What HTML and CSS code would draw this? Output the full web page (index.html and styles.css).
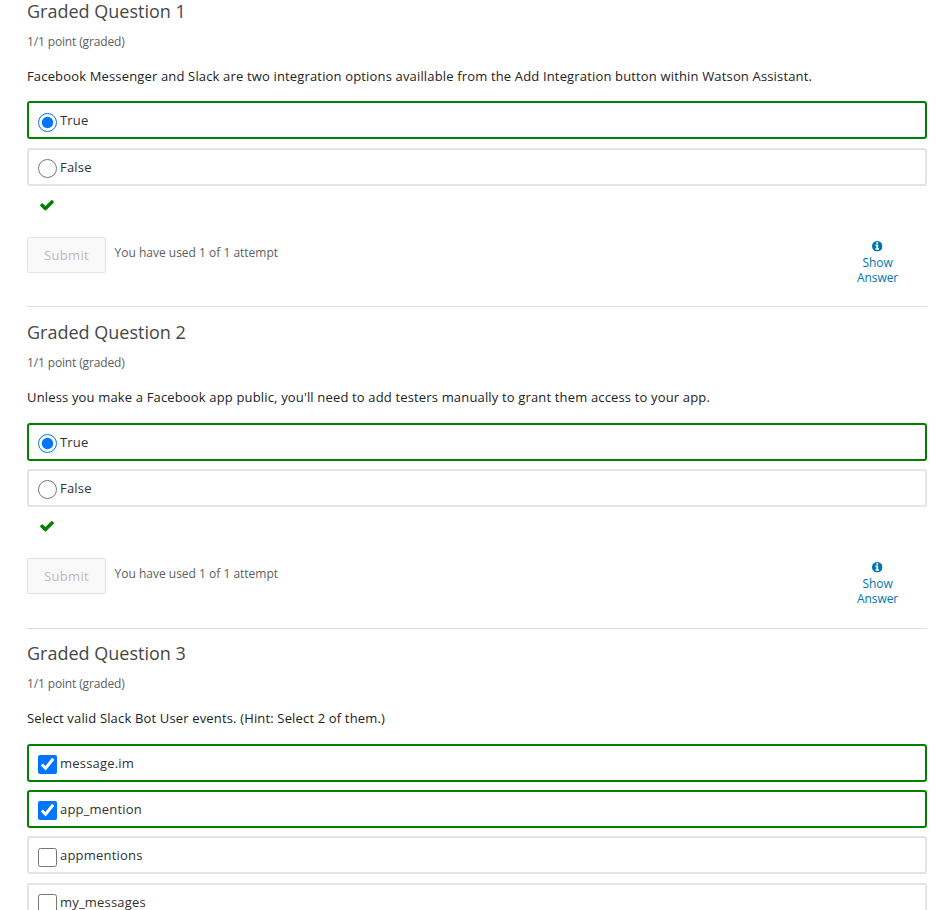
FILE: index.html
```html
<!DOCTYPE html>
<html lang="en">
<head>
<meta charset="utf-8">
<title>Graded Questions</title>
<link rel="stylesheet" href="styles.css">
</head>
<body>
<svg width="0" height="0" class="sprite" aria-hidden="true">
  <symbol id="check" viewBox="0 0 1792 1792"><path d="M1671 566q0 40-28 68l-724 724-136 136q-28 28-68 28t-68-28l-136-136-362-362q-28-28-28-68t28-68l136-136q28-28 68-28t68 28l294 295 656-657q28-28 68-28t68 28l136 136q28 28 28 68z"/></symbol>
  <symbol id="info" viewBox="128 128 1536 1536"><path d="M1152 1376v-160q0-14-9-23t-23-9h-96v-512q0-14-9-23t-23-9h-320q-14 0-23 9t-9 23v160q0 14 9 23t23 9h96v320h-96q-14 0-23 9t-9 23v160q0 14 9 23t23 9h448q14 0 23-9t9-23zM1024 480v-160q0-14-9-23t-23-9h-192q-14 0-23 9t-9 23v160q0 14 9 23t23 9h192q14 0 23-9t9-23zM1664 896q0 209-103 385.5t-279.5 279.5-385.5 103-385.5-103-279.5-279.5-103-385.5 103-385.5 279.5-279.5 385.5-103 385.5 103 279.5 279.5 103 385.5z"/></symbol>
</svg>
<main class="problems">
  <section class="problem">
    <h3 class="title">Graded Question 1</h3>
    <div class="progress">1/1 point (graded)</div>
    <p class="prompt">Facebook Messenger and Slack are two integration options availlable from the Add Integration button within Watson Assistant.</p>
    <div class="options">
      <label class="option correct"><input type="radio" name="q1" checked>True</label>
      <label class="option"><input type="radio" name="q1">False</label>
    </div>
    <div class="status"><svg class="check"><use href="#check"/></svg></div>
    <div class="actions">
      <button class="submit" disabled>Submit</button>
      <span class="attempts">You have used 1 of 1 attempt</span>
      <a class="show"><svg class="info"><use href="#info"/></svg>Show<br>Answer</a>
    </div>
  </section>
  <section class="problem">
    <h3 class="title">Graded Question 2</h3>
    <div class="progress">1/1 point (graded)</div>
    <p class="prompt">Unless you make a Facebook app public, you'll need to add testers manually to grant them access to your app.</p>
    <div class="options">
      <label class="option correct"><input type="radio" name="q2" checked>True</label>
      <label class="option"><input type="radio" name="q2">False</label>
    </div>
    <div class="status"><svg class="check"><use href="#check"/></svg></div>
    <div class="actions">
      <button class="submit" disabled>Submit</button>
      <span class="attempts">You have used 1 of 1 attempt</span>
      <a class="show"><svg class="info"><use href="#info"/></svg>Show<br>Answer</a>
    </div>
  </section>
  <section class="problem">
    <h3 class="title">Graded Question 3</h3>
    <div class="progress">1/1 point (graded)</div>
    <p class="prompt">Select valid Slack Bot User events. (Hint: Select 2 of them.)</p>
    <div class="options">
      <label class="option correct"><input type="checkbox" checked>message.im</label>
      <label class="option correct"><input type="checkbox" checked>app_mention</label>
      <label class="option"><input type="checkbox">appmentions</label>
      <label class="option"><input type="checkbox">my_messages</label>
    </div>
  </section>
</main>
</body>
</html>
```
FILE: styles.css
```css
* { box-sizing: border-box; }
body {
  margin: 0;
  height: 100vh;
  overflow: hidden;
  background: #fff;
  font-family: "Open Sans", sans-serif;
  font-size: 13px;
  color: #313131;
}
.sprite { display: none; }
.problems {
  display: flow-root;
  height: 100vh;
  overflow: hidden;
  padding: 0 24px 0 27px;
}
.problem {
  height: 321.2px;
  padding-top: 12.7px;
  border-bottom: 1px solid #ddd;
}
.problem:first-child { margin-top: -13.85px; }
.problem:last-child { height: auto; border: 0; }
.title {
  margin: 0;
  font-size: 18px;
  font-weight: 400;
  line-height: 24px;
  letter-spacing: 0;
  color: #474747;
}
.progress {
  margin-top: 9.2px;
  font-size: 12px;
  line-height: 20px;
  letter-spacing: -0.14px;
  color: #5e5e5e;
}
.prompt {
  margin: 13.9px 0 15.4px;
  line-height: 20px;
  letter-spacing: 0.157px;
  white-space: nowrap;
  color: #222;
}
.options {
  display: flex;
  flex-direction: column;
  gap: 8.3px;
}
.option {
  display: flex;
  align-items: center;
  height: 38px;
  padding-left: 9px;
  border: 2px solid #e4e4e4;
  border-radius: 3px;
  letter-spacing: 0.2px;
}
.option.correct { border-color: #008100; }
.option input {
  width: 19px;
  height: 19px;
  margin: 4px 3px 0 0;
}
.status {
  display: flex;
  align-items: center;
  height: 20px;
  margin-top: 9.4px;
  padding-left: 12.4px;
}
.check {
  width: 16px;
  height: 16px;
  fill: #008100;
}
.actions {
  display: flex;
  align-items: flex-start;
  margin-top: 21.6px;
}
.submit {
  width: 79px;
  height: 36px;
  padding: 0;
  border: 1px solid #e4e4e4;
  border-radius: 2px;
  background: #f9f9f9;
  font: 13px "Open Sans", sans-serif;
  letter-spacing: 0.3px;
  color: #bbb;
}
.attempts {
  margin: 6px 0 0 8.5px;
  font-size: 12px;
  line-height: 20px;
  letter-spacing: 0;
  color: #5e5e5e;
}
.show {
  width: 60px;
  margin: 4.6px 19.4px 0 auto;
  font-size: 12px;
  line-height: 15px;
  letter-spacing: -0.1px;
  text-align: center;
  color: #0075b4;
}
.info {
  display: block;
  width: 10.5px;
  height: 10.5px;
  margin: 0 auto 3px;
  fill: #0075b4;
}
```
